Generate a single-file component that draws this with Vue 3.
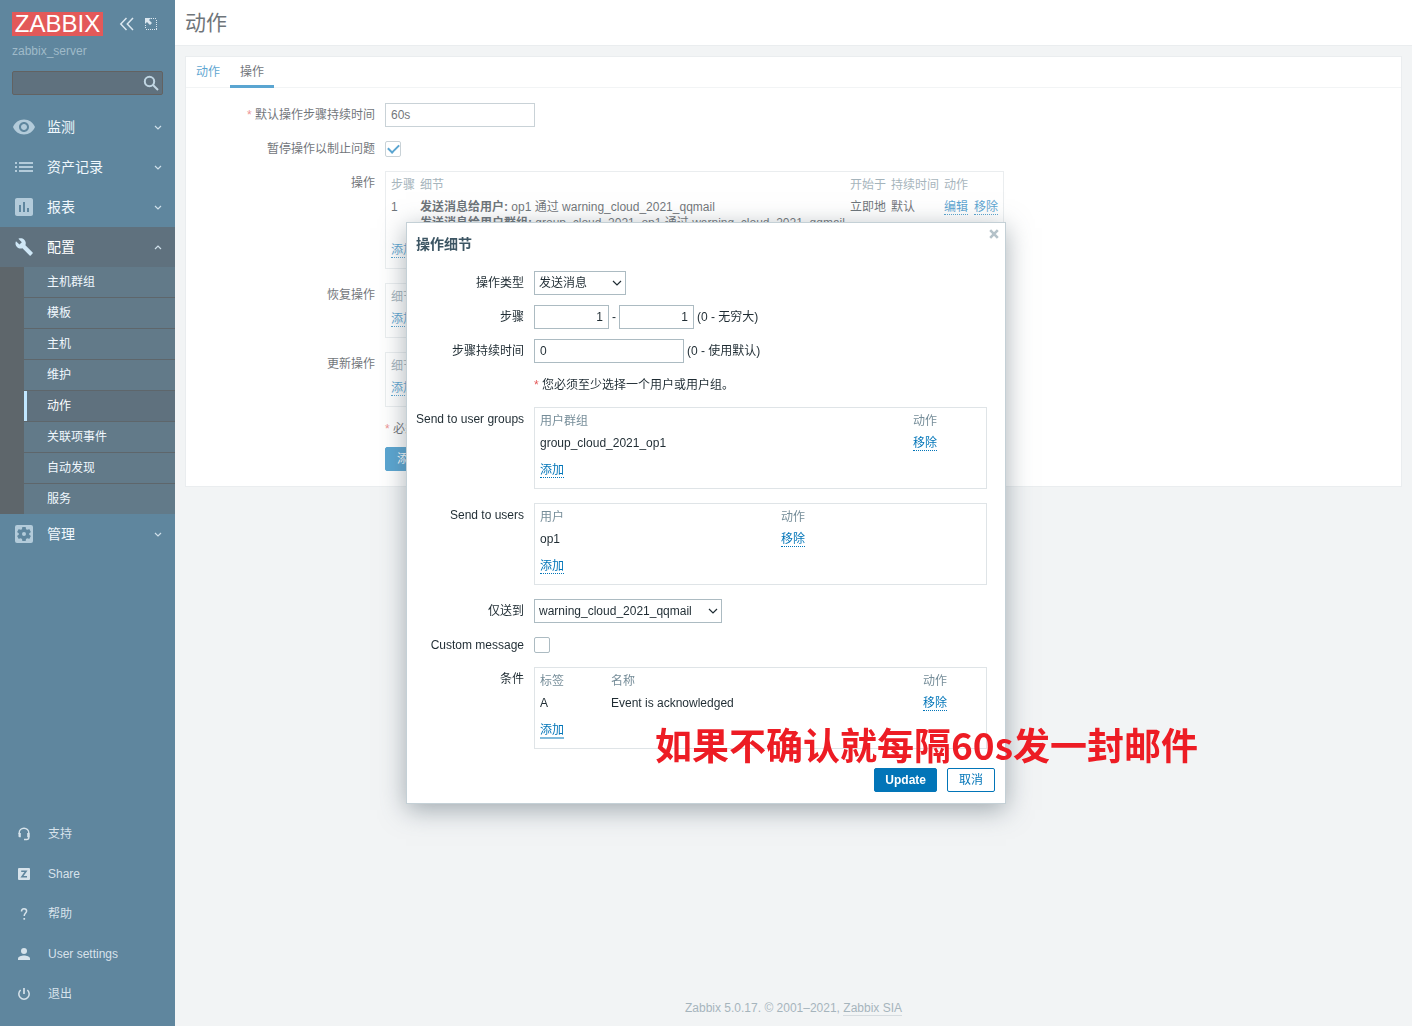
<script setup>
import { ref } from 'vue'

const menu = [
  { label: '监测', icon: 'eye' },
  { label: '资产记录', icon: 'list' },
  { label: '报表', icon: 'chart' },
  {
    label: '配置',
    icon: 'wrench',
    open: true,
    items: ['主机群组', '模板', '主机', '维护', '动作', '关联项事件', '自动发现', '服务'],
  },
  { label: '管理', icon: 'gear' },
]
const current = '动作'

const support = [
  { label: '支持', icon: 'headset' },
  { label: 'Share', icon: 'share' },
  { label: '帮助', icon: 'help' },
  { label: 'User settings', icon: 'user' },
  { label: '退出', icon: 'power' },
]

const search = ref('')
const duration = ref('60s')
const pause = ref(true)
const opType = ref('发送消息')
const stepFrom = ref('1')
const stepTo = ref('1')
const stepDuration = ref('0')
const media = ref('warning_cloud_2021_qqmail')
const custom = ref(false)
</script>

<template>
  <div class="page">
    <aside class="sidebar">
      <div class="brand">
        <a class="logo" href="#">ZABBIX</a>
        <button class="icon-btn" type="button" aria-label="Collapse sidebar">
          <svg width="16" height="16" viewBox="0 0 16 16" fill="none" stroke="currentColor" stroke-width="1.5">
            <path d="M7.500 2 1.800 8l5.700 6M14 2 8.300 8l5.700 6" />
          </svg>
        </button>
        <button class="icon-btn" type="button" aria-label="Hide sidebar">
          <svg width="16" height="16" viewBox="0 0 16 16" fill="none" stroke="currentColor">
            <path d="M8 2.500h6M13.500 4v9M14 13.500H2M2.500 12V8" stroke-dasharray="1 1" shape-rendering="crispEdges" />
            <path d="M2 2h6L6 4l3 3-2 2-3-3-2 2z" fill="currentColor" stroke="none" />
          </svg>
        </button>
      </div>
      <div class="server">zabbix_server</div>
      <form class="search" @submit.prevent>
        <input v-model="search" type="text" aria-label="Search" />
        <button type="submit" aria-label="Search">
          <svg width="18" height="18" viewBox="0 0 18 18" fill="none" stroke="currentColor" stroke-width="2">
            <circle cx="7.500" cy="7.500" r="4.700" />
            <path d="m11 11 5 5" />
          </svg>
        </button>
      </form>

      <nav class="menu">
        <div v-for="m in menu" :key="m.label">
          <a href="#" class="menu-item" :class="{ open: m.open }">
            <svg class="menu-icon" width="24" height="24" viewBox="0 0 24 24" fill="currentColor">
              <path
                v-if="m.icon === 'eye'"
                d="M12 4.500C7 4.500 2.730 7.610 1 12c1.730 4.390 6 7.500 11 7.500s9.270-3.110 11-7.500c-1.730-4.390-6-7.500-11-7.500zM12 17c-2.760 0-5-2.240-5-5s2.240-5 5-5 5 2.240 5 5-2.240 5-5 5zm0-8c-1.660 0-3 1.340-3 3s1.340 3 3 3 3-1.340 3-3-1.340-3-3-3z"
              />
              <path v-else-if="m.icon === 'list'" d="M3 7h2v2H3zM7 7h14v2H7zM3 11h2v2H3zM7 11h14v2H7zM3 15h2v2H3zM7 15h14v2H7z" />
              <path
                v-else-if="m.icon === 'chart'"
                d="M19 3H5c-1.100 0-2 .9-2 2v14c0 1.100.9 2 2 2h14c1.100 0 2-.9 2-2V5c0-1.100-.9-2-2-2zM9 17H7v-7h2v7zm4 0h-2V7h2v10zm4 0h-2v-4h2v4z"
              />
              <path
                v-else-if="m.icon === 'wrench'"
                transform="translate(2.700 2.500) scale(.79)"
                d="M22.700 19l-9.100-9.100c.9-2.300.4-5-1.500-6.900-2-2-5-2.400-7.400-1.300L9 6 6 9 1.600 4.700C.4 7.100.9 10.100 2.900 12.100c1.900 1.900 4.600 2.400 6.900 1.500l9.100 9.100c.4.4 1 .4 1.400 0l2.300-2.300c.5-.4.5-1.100.1-1.400z"
              />
              <template v-else>
                <rect x="3" y="3" width="18" height="18" rx="2" />
                <path
                  class="cut"
                  transform="translate(3.600 3.600) scale(.7)"
                  d="M19.430 12.980c.04-.32.07-.64.07-.98s-.03-.66-.07-.98l2.110-1.650c.19-.15.24-.42.12-.64l-2-3.460c-.12-.22-.39-.3-.61-.22l-2.490 1c-.52-.4-1.080-.73-1.690-.98l-.38-2.650C14.460 2.180 14.250 2 14 2h-4c-.25 0-.46.18-.49.42l-.38 2.650c-.61.25-1.170.59-1.690.98l-2.490-1c-.23-.09-.49 0-.61.22l-2 3.460c-.13.22-.07.49.12.64l2.110 1.650c-.04.32-.07.65-.07.98s.03.66.07.98l-2.110 1.650c-.19.15-.24.42-.12.64l2 3.460c.12.22.39.3.61.22l2.490-1c.52.4 1.080.73 1.690.98l.38 2.650c.03.24.24.42.49.42h4c.25 0 .46-.18.49-.42l.38-2.650c.61-.25 1.170-.59 1.690-.98l2.490 1c.23.09.49 0 .61-.22l2-3.460c.12-.22.07-.49-.12-.64l-2.110-1.650z"
                />
                <circle cx="12" cy="12" r="2" />
              </template>
            </svg>
            <span>{{ m.label }}</span>
            <svg class="arrow" width="8" height="8" viewBox="0 0 8 8" fill="none" stroke="currentColor" stroke-width="1.200">
              <path :d="m.open ? 'M1 6l3-3 3 3' : 'M1 3l3 3 3-3'" />
            </svg>
          </a>
          <ul v-if="m.items" class="submenu">
            <li v-for="s in m.items" :key="s"><a href="#" :class="{ current: s === current }">{{ s }}</a></li>
          </ul>
        </div>
      </nav>

      <nav class="support">
        <a v-for="s in support" :key="s.label" href="#">
          <svg width="16" height="16" viewBox="0 0 16 16" fill="none" stroke="currentColor">
            <template v-if="s.icon === 'headset'">
              <path d="M3.200 8V7a4.800 4.800 0 0 1 9.600 0v4.500c0 1.300-.8 2-2 2H8" stroke-width="1.400" />
              <path d="M2.500 7h2.300v4.200H3.500a1 1 0 0 1-1-1zM13.500 7h-2.300v4.200h2.300z" fill="currentColor" stroke="none" />
            </template>
            <template v-else-if="s.icon === 'share'">
              <rect x="2" y="2" width="12" height="12" rx="1" fill="currentColor" stroke="none" />
              <path class="cut-line" d="M5.200 5.200h4.800L6 10.800h5" stroke-width="1.600" />
            </template>
            <template v-else-if="s.icon === 'help'">
              <path d="M5.500 5.500C5.500 3.500 6.500 2.700 8 2.700s2.600.9 2.600 2.400C10.600 7 8.200 7.300 8.200 10" stroke-width="1.500" />
              <path d="M7.400 12h1.700v1.700H7.400z" fill="currentColor" stroke="none" />
            </template>
            <g v-else-if="s.icon === 'user'" fill="currentColor" stroke="none">
              <circle cx="8" cy="5" r="3" />
              <path d="M2 14v-1.500C2 10.500 5.500 9.500 8 9.500s6 1 6 3V14z" />
            </g>
            <template v-else>
              <path d="M4.600 4a5.200 5.200 0 1 0 6.800 0" stroke-width="1.500" />
              <path d="M8 2v6" stroke-width="1.700" />
            </template>
          </svg>
          <span>{{ s.label }}</span>
        </a>
      </nav>
    </aside>

    <main class="main">
      <header class="header"><h1>动作</h1></header>
      <section class="card">
        <div class="tabs">
          <a href="#">动作</a>
          <a href="#" class="selected">操作</a>
        </div>
        <form class="form back-form" @submit.prevent>
          <label for="duration"><i class="req">*</i> 默认操作步骤持续时间</label>
          <div class="field"><input id="duration" v-model="duration" class="text wide" type="text" /></div>

          <label for="pause">暂停操作以制止问题</label>
          <div class="field"><input id="pause" v-model="pause" type="checkbox" /></div>

          <span class="label">操作</span>
          <div class="box fit">
            <table>
              <thead>
                <tr><th>步骤</th><th class="details">细节</th><th>开始于</th><th>持续时间</th><th>动作</th></tr>
              </thead>
              <tbody>
                <tr class="multi">
                  <td>1</td>
                  <td>
                    <b>发送消息给用户:</b> op1 通过 warning_cloud_2021_qqmail<br />
                    <b>发送消息给用户群组:</b> group_cloud_2021_op1 通过 warning_cloud_2021_qqmail
                  </td>
                  <td>立即地</td>
                  <td>默认</td>
                  <td class="links"><a class="link" href="#">编辑</a><a class="link" href="#">移除</a></td>
                </tr>
                <tr class="add"><td colspan="5"><a class="link" href="#">添加</a></td></tr>
              </tbody>
            </table>
          </div>

          <template v-for="name in ['恢复操作', '更新操作']" :key="name">
            <span class="label">{{ name }}</span>
            <div class="box short">
              <table>
                <thead><tr><th>细节</th><th>动作</th></tr></thead>
                <tbody><tr><td colspan="2"><a class="link" href="#">添加</a></td></tr></tbody>
              </table>
            </div>
          </template>

          <p class="note"><i class="req">*</i> 必须设定至少一项操作</p>
          <div class="submit"><button class="btn primary" type="submit">添加</button></div>
        </form>
      </section>
      <footer class="footer">Zabbix 5.0.17. © 2001–2021, <a href="#">Zabbix SIA</a></footer>
    </main>

    <div class="overlay">
      <div class="dialog" role="dialog" aria-labelledby="dlg-title">
        <button class="close" type="button" aria-label="Close">
          <svg width="10" height="10" viewBox="0 0 10 10" stroke="currentColor" stroke-width="2.600"><path d="m1.200 1.200 7.600 7.600M8.800 1.200 1.200 8.800" /></svg>
        </button>
        <h2 id="dlg-title">操作细节</h2>
        <form class="form" @submit.prevent>
          <label for="optype">操作类型</label>
          <div class="field">
            <span class="select type">
              <select id="optype" v-model="opType"><option>发送消息</option></select>
              <svg width="10" height="8" viewBox="0 0 10 8" fill="none" stroke="currentColor" stroke-width="1.200"><path d="m1 2 4 4 4-4" /></svg>
            </span>
          </div>

          <label for="from">步骤</label>
          <div class="field">
            <input id="from" v-model="stepFrom" class="text num" type="text" />
            <span>-</span>
            <input v-model="stepTo" class="text num" type="text" aria-label="步骤 - 至" />
            <span>(0 - 无穷大)</span>
          </div>

          <label for="stepdur">步骤持续时间</label>
          <div class="field">
            <input id="stepdur" v-model="stepDuration" class="text wide" type="text" />
            <span>(0 - 使用默认)</span>
          </div>

          <p class="hint"><i class="req">*</i> 您必须至少选择一个用户或用户组。</p>

          <span class="label">Send to user groups</span>
          <div class="box">
            <table class="groups">
              <thead><tr><th>用户群组</th><th>动作</th></tr></thead>
              <tbody>
                <tr><td>group_cloud_2021_op1</td><td><a class="link" href="#">移除</a></td></tr>
                <tr class="add"><td colspan="2"><a class="link" href="#">添加</a></td></tr>
              </tbody>
            </table>
          </div>

          <span class="label">Send to users</span>
          <div class="box">
            <table class="users">
              <thead><tr><th>用户</th><th>动作</th></tr></thead>
              <tbody>
                <tr><td>op1</td><td><a class="link" href="#">移除</a></td></tr>
                <tr class="add"><td colspan="2"><a class="link" href="#">添加</a></td></tr>
              </tbody>
            </table>
          </div>

          <label for="media">仅送到</label>
          <div class="field">
            <span class="select media">
              <select id="media" v-model="media"><option>warning_cloud_2021_qqmail</option></select>
              <svg width="10" height="8" viewBox="0 0 10 8" fill="none" stroke="currentColor" stroke-width="1.200"><path d="m1 2 4 4 4-4" /></svg>
            </span>
          </div>

          <label for="custom">Custom message</label>
          <div class="field"><input id="custom" v-model="custom" type="checkbox" /></div>

          <span class="label">条件</span>
          <div class="box">
            <table class="conditions">
              <thead><tr><th>标签</th><th>名称</th><th>动作</th></tr></thead>
              <tbody>
                <tr><td>A</td><td>Event is acknowledged</td><td><a class="link" href="#">移除</a></td></tr>
                <tr class="add"><td colspan="3"><a class="link active" href="#">添加</a></td></tr>
              </tbody>
            </table>
          </div>
        </form>
        <div class="actions">
          <button class="btn primary strong" type="button">Update</button>
          <button class="btn" type="button">取消</button>
        </div>
        <div class="annotation">如果不确认就每隔60s发一封邮件</div>
      </div>
    </div>
  </div>
</template>

<style>
body {
  margin: 0;
  background: #ebeef0;
}
</style>

<style scoped>
.page {
  display: flex;
  min-height: 100vh;
  font: 12px/16px "Liberation Sans", "Noto Sans CJK SC", sans-serif;
  color: #1f2c33;
}
.page * {
  box-sizing: border-box;
}
a {
  color: #0275b8;
  text-decoration: none;
}
button,
input,
select {
  margin: 0;
  font: inherit;
  color: inherit;
}

/* Sidebar */
.sidebar {
  display: flex;
  flex-direction: column;
  flex: none;
  width: 175px;
  background: #0a466a;
}
.brand {
  display: flex;
  align-items: center;
  gap: 8px;
  padding: 12px 12px 0;
}
.logo {
  flex: none;
  width: 91px;
  margin-right: 8px;
  background: #d40000;
  color: #fff;
  font-size: 24px;
  line-height: 24px;
  text-align: center;
}
.icon-btn {
  display: flex;
  padding: 0;
  border: 0;
  background: none;
  color: #c8dbe8;
}
.server {
  padding: 7px 12px 0;
  color: #6d96ad;
}
.search {
  display: flex;
  margin: 12px 12px;
  height: 24px;
  border: 1px solid #0f0f0f;
  border-radius: 2px;
  background: #0a2539;
}
.search input {
  flex: 1;
  width: 100%;
  min-width: 0;
  border: 0;
  background: none;
  color: #fff;
  outline: 0;
}
.search button {
  display: flex;
  align-items: center;
  padding: 0 2px;
  border: 0;
  background: none;
  color: #9fc0d4;
}
.menu {
  display: block;
}
.menu-item {
  display: flex;
  align-items: center;
  height: 40px;
  padding: 0 13px 0 12px;
  color: #e8f4fc;
  font-size: 14px;
}
.menu-item.open {
  background: #0a2539;
  color: #fff;
}
.menu-item span {
  flex: 1;
  margin-left: 11px;
}
.menu-icon {
  color: #8aafc6;
}
.open .menu-icon {
  color: #b5dbf2;
}
.cut {
  fill: #0a466a;
}
.arrow {
  color: #b5cfdf;
}
.submenu {
  margin: 0;
  padding: 0;
  list-style: none;
  border-left: 24px solid #08141c;
  background: #0e334b;
}
.submenu li + li {
  border-top: 1px solid #08141c;
}
.submenu a {
  display: block;
  padding-left: 20px;
  border-left: 3px solid transparent;
  color: #e8f4fc;
  line-height: 30px;
}
.submenu .current {
  border-left-color: #a2dbff;
  background: #0a2539;
  color: #fff;
}
.support {
  margin-top: auto;
  padding-bottom: 12px;
}
.support a {
  display: flex;
  align-items: center;
  gap: 16px;
  height: 40px;
  padding-left: 16px;
  color: #c2d5e1;
}
.cut-line {
  stroke: #0a466a;
}

/* Page */
.main {
  display: flex;
  flex-direction: column;
  flex: 1;
  min-width: 0;
}
.header {
  padding: 0 10px;
  border-bottom: 1px solid #dfe4e7;
  background: #fff;
}
h1 {
  margin: 0;
  color: #1f2c33;
  font-size: 21px;
  font-weight: 400;
  line-height: 45px;
}
.card {
  margin: 10px;
  border: 1px solid #dfe4e7;
  background: #fff;
}
.tabs {
  display: flex;
  height: 31px;
  border-bottom: 1px solid #ebeef0;
}
.tabs a {
  height: 31px;
  padding: 0 10px;
  line-height: 30px;
}
.tabs .selected {
  border-bottom: 3px solid #0275b8;
  color: #1f2c33;
}
.footer {
  margin-top: auto;
  padding-bottom: 10px;
  color: #768d99;
  text-align: center;
}
.footer a {
  border-bottom: 1px solid #c0cad0;
  color: inherit;
}

/* Forms */
.form {
  display: grid;
  grid-template-columns: 108px minmax(0, 1fr);
  gap: 10px;
}
.back-form {
  grid-template-columns: 189px minmax(0, 1fr);
  padding: 15px 10px 15px 0;
}
.form > label,
.label {
  line-height: 24px;
  text-align: right;
  white-space: nowrap;
}
.req {
  color: #e45959;
  font-style: normal;
}
.field {
  display: flex;
  align-items: center;
  gap: 3px;
  height: 24px;
}
.text {
  height: 24px;
  padding: 0 5px;
  border: 1px solid #acbbc2;
  background: #fff;
}
.wide {
  width: 150px;
}
.num {
  width: 75px;
  text-align: right;
}
.select {
  position: relative;
  display: block;
}
.select.type {
  width: 92px;
}
.select.media {
  width: 188px;
}
.select select {
  display: block;
  width: 100%;
  height: 24px;
  padding: 0 20px 0 4px;
  appearance: none;
  border: 1px solid #acbbc2;
  border-radius: 0;
  background: #fff;
}
.select svg {
  position: absolute;
  top: 8px;
  right: 4px;
  pointer-events: none;
}
input[type="checkbox"] {
  display: grid;
  place-items: center;
  width: 16px;
  height: 16px;
  appearance: none;
  border: 1px solid #acbbc2;
  border-radius: 2px;
  background: #fff;
}
input[type="checkbox"]:checked::after {
  content: "";
  width: 9px;
  height: 5px;
  margin-bottom: 3px;
  border: solid #0275b8;
  border-width: 0 0 2px 2px;
  transform: rotate(-45deg);
}
.hint,
.note,
.submit {
  grid-column: 2;
  margin: 0;
}
.hint {
  line-height: 24px;
}
.box {
  margin-bottom: 4px;
  padding: 2px 5px;
  border: 1px solid #dfe4e7;
}
.back-form .box {
  justify-self: start;
}
.box.short {
  width: 619px;
  padding-bottom: 7px;
}
table {
  width: 100%;
  border-collapse: collapse;
}
.fit table {
  width: auto;
}
th,
td {
  height: 22px;
  padding: 0 5px 0 0;
  font-weight: 400;
  text-align: left;
  white-space: nowrap;
}
th:last-child,
td:last-child {
  padding-right: 0;
}
th {
  color: #768d99;
}
.details {
  width: 430px;
}
.multi td {
  padding-top: 3px;
  padding-bottom: 3px;
  vertical-align: top;
}
.add td {
  height: 32px;
}
.link {
  border-bottom: 1px dotted #0275b8;
}
.links .link + .link {
  margin-left: 6px;
}
.link.active {
  border-bottom: 2px solid #7fbadb;
}
.groups th:first-child {
  width: 373px;
}
.users th:first-child {
  width: 241px;
}
.conditions th:first-child {
  width: 71px;
}
.conditions th:nth-child(2) {
  width: 312px;
}
.btn {
  height: 24px;
  padding: 0 11px;
  border: 1px solid #0275b8;
  border-radius: 2px;
  background: #fff;
  color: #0275b8;
}
.btn.primary {
  background: #0275b8;
  color: #fff;
}
.btn.strong {
  padding: 0 10px;
  font-weight: 700;
}

/* Dialog */
.overlay {
  position: fixed;
  inset: 0;
  display: flex;
  align-items: center;
  justify-content: center;
  background: rgba(255, 255, 255, 0.35);
}
.dialog {
  position: relative;
  width: 600px;
  padding: 12px 10px 11px 9px;
  border: 1px solid #c4d0d6;
  background: #fff;
  box-shadow: 0 6px 24px rgba(82, 98, 107, 0.5);
}
h2 {
  margin: 0 0 18px;
  color: #3c5563;
  font-size: 14px;
  line-height: 18px;
}
.dialog .form {
  padding-right: 8px;
}
.close {
  position: absolute;
  top: 6px;
  right: 6px;
  display: flex;
  padding: 0;
  border: 0;
  background: none;
  color: #b4c2c9;
}
.actions {
  display: flex;
  justify-content: flex-end;
  gap: 10px;
  margin-top: 15px;
}
.annotation {
  position: absolute;
  top: 497px;
  left: 248px;
  color: #ed1c24;
  font: 700 37px/48px "Noto Sans CJK SC", sans-serif;
  white-space: nowrap;
}
</style>
